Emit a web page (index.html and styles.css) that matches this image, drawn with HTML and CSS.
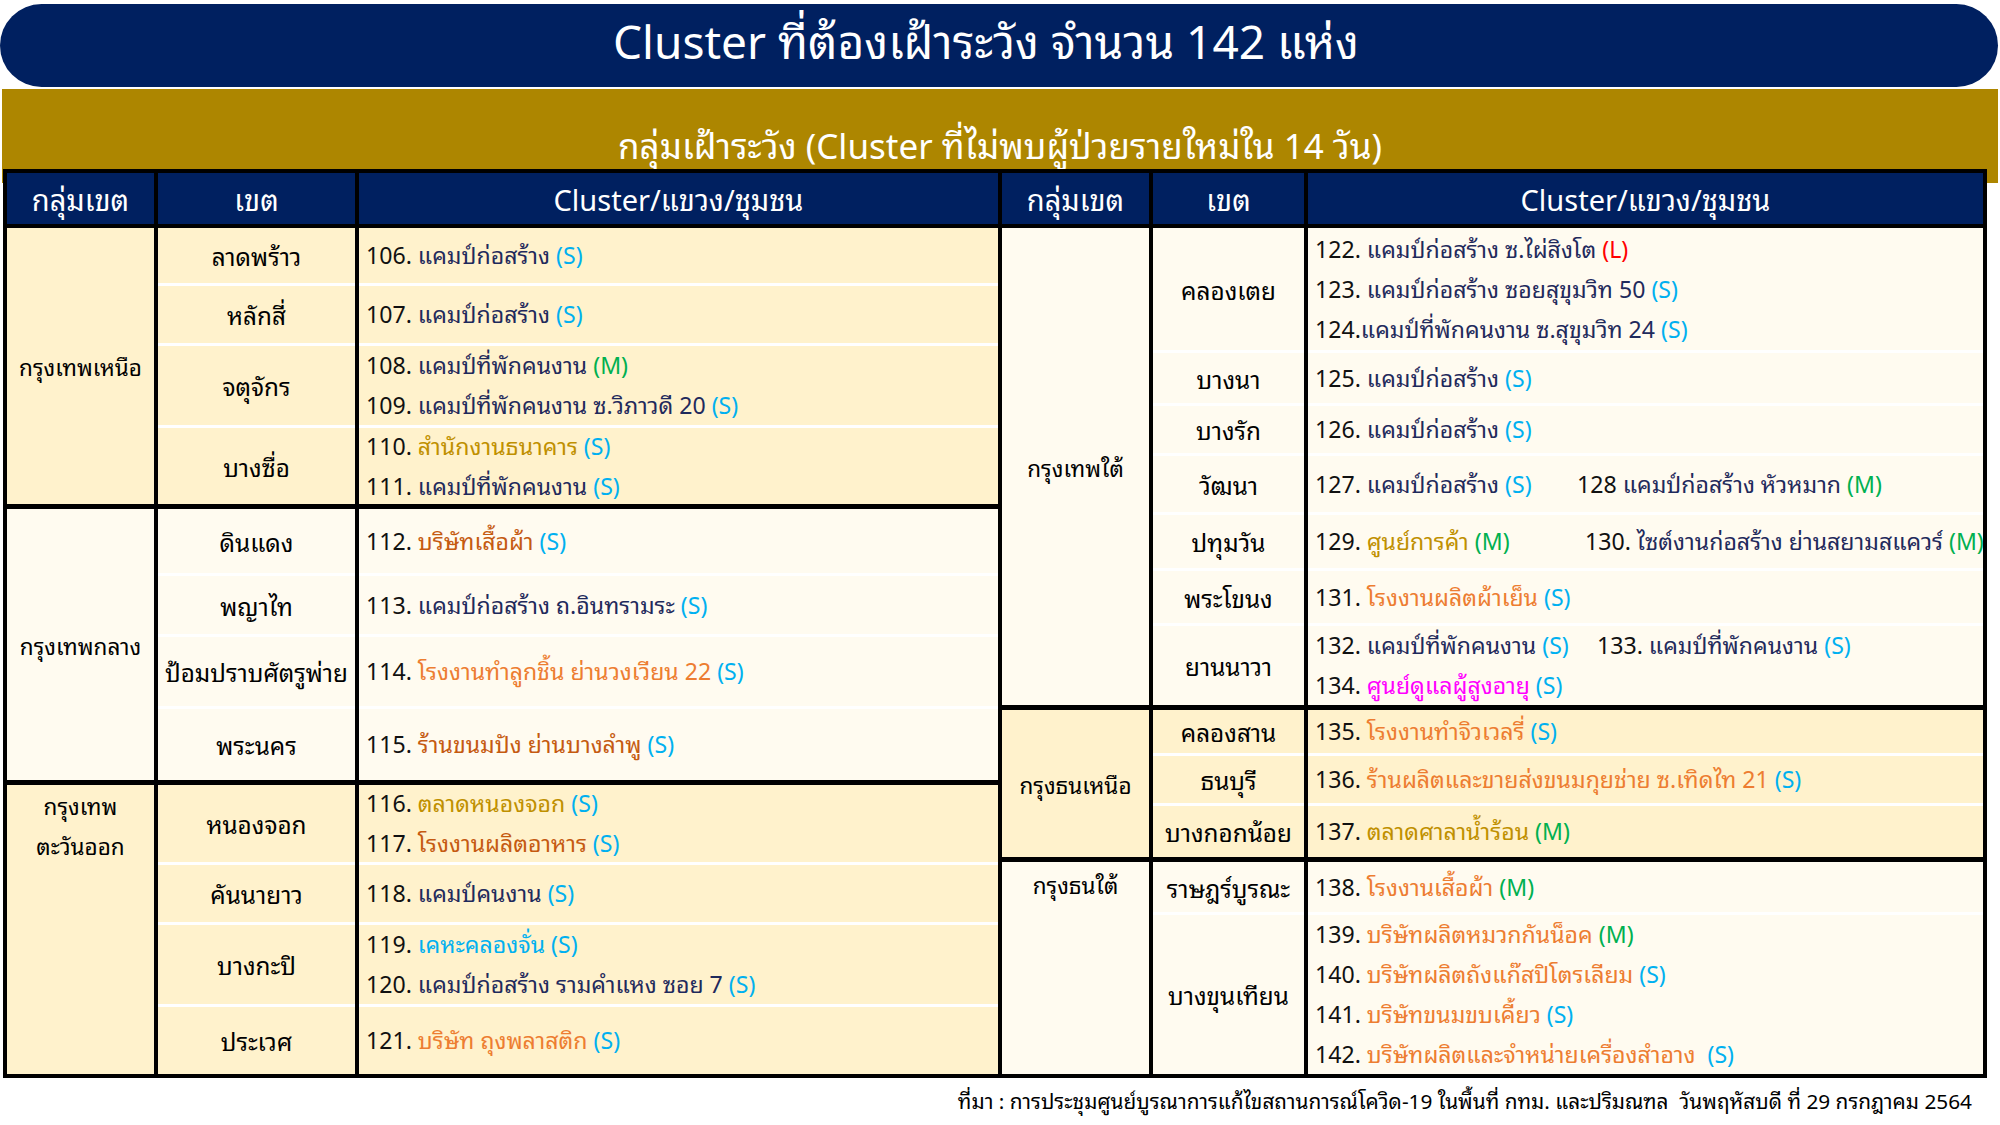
FILE: index.html
```html
<!DOCTYPE html>
<html lang="th">
<head>
<meta charset="utf-8">
<title>Cluster ที่ต้องเฝ้าระวัง</title>
<link rel="stylesheet" href="styles.css">
</head>
<body>
<div class="page">
  <header class="title">Cluster ที่ต้องเฝ้าระวัง จำนวน 142 แห่ง</header>
  <div class="band">กลุ่มเฝ้าระวัง (Cluster ที่ไม่พบผู้ป่วยรายใหม่ใน 14 วัน)</div>

  <div class="tables">
    <div class="tbl tbl-left">
      <div class="th">กลุ่มเขต</div>
      <div class="th">เขต</div>
      <div class="th">Cluster/แขวง/ชุมชน</div>

      <div class="zone y span4">กรุงเทพเหนือ</div>
      <div class="dist y">ลาดพร้าว</div>
      <div class="items y"><p><span class="n">106.</span> <span class="nv">แคมป์ก่อสร้าง</span> <span class="s">(S)</span></p></div>
      <div class="dist y sep">หลักสี่</div>
      <div class="items y sep"><p><span class="n">107.</span> <span class="nv">แคมป์ก่อสร้าง</span> <span class="s">(S)</span></p></div>
      <div class="dist y sep">จตุจักร</div>
      <div class="items y sep">
        <p><span class="n">108.</span> <span class="nv">แคมป์ที่พักคนงาน</span> <span class="m">(M)</span></p>
        <p><span class="n">109.</span> <span class="nv">แคมป์ที่พักคนงาน ซ.วิภาวดี 20</span> <span class="s">(S)</span></p>
      </div>
      <div class="dist y sep">บางซื่อ</div>
      <div class="items y sep">
        <p><span class="n">110.</span> <span class="gd">สำนักงานธนาคาร</span> <span class="s">(S)</span></p>
        <p><span class="n">111.</span> <span class="nv">แคมป์ที่พักคนงาน</span> <span class="s">(S)</span></p>
      </div>

      <div class="zone w span4 grp">กรุงเทพกลาง</div>
      <div class="dist w grp">ดินแดง</div>
      <div class="items w grp"><p><span class="n">112.</span> <span class="br">บริษัทเสื้อผ้า</span> <span class="s">(S)</span></p></div>
      <div class="dist w sep">พญาไท</div>
      <div class="items w sep"><p><span class="n">113.</span> <span class="nv">แคมป์ก่อสร้าง ถ.อินทรามระ</span> <span class="s">(S)</span></p></div>
      <div class="dist w sep">ป้อมปราบศัตรูพ่าย</div>
      <div class="items w sep"><p><span class="n">114.</span> <span class="or">โรงงานทำลูกชิ้น ย่านวงเวียน 22</span> <span class="s">(S)</span></p></div>
      <div class="dist w sep">พระนคร</div>
      <div class="items w sep"><p><span class="n">115.</span> <span class="br">ร้านขนมปัง ย่านบางลำพู</span> <span class="s">(S)</span></p></div>

      <div class="zone y span4 grp top">กรุงเทพ<br>ตะวันออก</div>
      <div class="dist y grp">หนองจอก</div>
      <div class="items y grp">
        <p><span class="n">116.</span> <span class="gd">ตลาดหนองจอก</span> <span class="s">(S)</span></p>
        <p><span class="n">117.</span> <span class="br">โรงงานผลิตอาหาร</span> <span class="s">(S)</span></p>
      </div>
      <div class="dist y sep">คันนายาว</div>
      <div class="items y sep"><p><span class="n">118.</span> <span class="nv">แคมป์คนงาน</span> <span class="s">(S)</span></p></div>
      <div class="dist y sep">บางกะปิ</div>
      <div class="items y sep">
        <p><span class="n">119.</span> <span class="bl">เคหะคลองจั่น</span> <span class="s">(S)</span></p>
        <p><span class="n">120.</span> <span class="nv">แคมป์ก่อสร้าง รามคำแหง ซอย 7</span> <span class="s">(S)</span></p>
      </div>
      <div class="dist y sep">ประเวศ</div>
      <div class="items y sep"><p><span class="n">121.</span> <span class="or">บริษัท ถุงพลาสติก</span> <span class="s">(S)</span></p></div>
    </div>

    <div class="tbl tbl-right">
      <div class="th">กลุ่มเขต</div>
      <div class="th">เขต</div>
      <div class="th">Cluster/แขวง/ชุมชน</div>

      <div class="zone w span7">กรุงเทพใต้</div>
      <div class="dist w">คลองเตย</div>
      <div class="items w">
        <p><span class="n">122.</span> <span class="nv">แคมป์ก่อสร้าง ซ.ไผ่สิงโต</span> <span class="l">(L)</span></p>
        <p><span class="n">123.</span> <span class="nv">แคมป์ก่อสร้าง ซอยสุขุมวิท 50</span> <span class="s">(S)</span></p>
        <p><span class="n">124.</span><span class="nv">แคมป์ที่พักคนงาน ซ.สุขุมวิท 24</span> <span class="s">(S)</span></p>
      </div>
      <div class="dist w sep">บางนา</div>
      <div class="items w sep"><p><span class="n">125.</span> <span class="nv">แคมป์ก่อสร้าง</span> <span class="s">(S)</span></p></div>
      <div class="dist w sep">บางรัก</div>
      <div class="items w sep"><p><span class="n">126.</span> <span class="nv">แคมป์ก่อสร้าง</span> <span class="s">(S)</span></p></div>
      <div class="dist w sep">วัฒนา</div>
      <div class="items w sep">
        <p class="pair"><span class="first w262"><span class="n">127.</span> <span class="nv">แคมป์ก่อสร้าง</span> <span class="s">(S)</span></span><span><span class="n">128</span> <span class="nv">แคมป์ก่อสร้าง หัวหมาก</span> <span class="m">(M)</span></span></p>
      </div>
      <div class="dist w sep">ปทุมวัน</div>
      <div class="items w sep">
        <p class="pair"><span class="first w270"><span class="n">129.</span> <span class="gd">ศูนย์การค้า</span> <span class="m">(M)</span></span><span><span class="n">130.</span> <span class="nv">ไซต์งานก่อสร้าง ย่านสยามสแควร์</span> <span class="m">(M)</span></span></p>
      </div>
      <div class="dist w sep">พระโขนง</div>
      <div class="items w sep"><p><span class="n">131.</span> <span class="or">โรงงานผลิตผ้าเย็น</span> <span class="s">(S)</span></p></div>
      <div class="dist w sep">ยานนาวา</div>
      <div class="items w sep">
        <p class="pair"><span class="first w282"><span class="n">132.</span> <span class="nv">แคมป์ที่พักคนงาน</span> <span class="s">(S)</span></span><span><span class="n">133.</span> <span class="nv">แคมป์ที่พักคนงาน</span> <span class="s">(S)</span></span></p>
        <p><span class="n">134.</span> <span class="mg">ศูนย์ดูแลผู้สูงอายุ</span> <span class="s">(S)</span></p>
      </div>

      <div class="zone y span3 grp">กรุงธนเหนือ</div>
      <div class="dist y grp">คลองสาน</div>
      <div class="items y grp"><p><span class="n">135.</span> <span class="or">โรงงานทำจิวเวลรี่</span> <span class="s">(S)</span></p></div>
      <div class="dist y sep">ธนบุรี</div>
      <div class="items y sep"><p><span class="n">136.</span> <span class="or">ร้านผลิตและขายส่งขนมกุยช่าย ซ.เทิดไท 21</span> <span class="s">(S)</span></p></div>
      <div class="dist y sep">บางกอกน้อย</div>
      <div class="items y sep"><p><span class="n">137.</span> <span class="gd">ตลาดศาลาน้ำร้อน</span> <span class="m">(M)</span></p></div>

      <div class="zone w span2 grp top top2">กรุงธนใต้</div>
      <div class="dist w grp">ราษฎร์บูรณะ</div>
      <div class="items w grp"><p><span class="n">138.</span> <span class="or">โรงงานเสื้อผ้า</span> <span class="m">(M)</span></p></div>
      <div class="dist w sep">บางขุนเทียน</div>
      <div class="items w sep">
        <p><span class="n">139.</span> <span class="or">บริษัทผลิตหมวกกันน็อค</span> <span class="m">(M)</span></p>
        <p><span class="n">140.</span> <span class="or">บริษัทผลิตถังแก๊สปิโตรเลียม</span> <span class="s">(S)</span></p>
        <p><span class="n">141.</span> <span class="or">บริษัทขนมขบเคี้ยว</span> <span class="s">(S)</span></p>
        <p><span class="n">142.</span> <span class="or">บริษัทผลิตและจำหน่ายเครื่องสำอาง</span> &nbsp;<span class="s">(S)</span></p>
      </div>
    </div>
  </div>

  <footer class="source">ที่มา : การประชุมศูนย์บูรณาการแก้ไขสถานการณ์โควิด-19 ในพื้นที่ กทม. และปริมณฑล &nbsp;วันพฤหัสบดี ที่ 29 กรกฎาคม 2564</footer>
</div>
</body>
</html>
```

FILE: styles.css
```css
* { box-sizing: border-box; }

html, body {
  margin: 0;
  padding: 0;
  background: #ffffff;
}

body {
  width: 2000px;
  height: 1125px;
  overflow: hidden;
  font-family: Tahoma, "Noto Sans Thai Looped", "Noto Sans Thai", "Noto Sans", "DejaVu Sans", sans-serif;
  font-stretch: 88%;
  color: #000;
}

.page {
  padding-top: 4px;
}

.title {
  height: 83px;
  margin: 0 2px 0 0;
  background: #002060;
  border-radius: 42px;
  color: #fff;
  font-size: 46px;
  display: flex;
  align-items: center;
  justify-content: center;
  padding: 0 26px 16px 0;
}

.band {
  height: 94px;
  margin: 2px 2px 0 2px;
  background: #ad8600;
  color: #fff;
  font-size: 35px;
  line-height: 40px;
  padding-top: 34px;
  text-align: center;
}

.tables {
  display: flex;
  margin: -14px 0 0 3px;
}

.tbl {
  display: grid;
  background: #000;
  border-top: 4px solid #000;
  border-bottom: 4px solid #000;
  border-right: 4px solid #000;
  column-gap: 4px;
}

.tbl-left {
  width: 999px;
  border-left: 4px solid #000;
  grid-template-columns: 147px 197px 639px;
  grid-template-rows: 55px 55px 60px 82px 79px 69px 61px 72px 74px 82px 60px 82px 70px;
}

.tbl-right {
  width: 985px;
  grid-template-columns: 147px 151px 675px;
  grid-template-rows: 55px 122px 53px 50px 59px 56px 55px 82px 48px 50px 54px 55px 162px;
}

.th {
  background: #002060;
  color: #fff;
  font-size: 29px;
  border-bottom: 4px solid #000;
  display: flex;
  align-items: center;
  justify-content: center;
  padding-bottom: 2px;
}

.y { background: #fff2cc; }
.w { background: #fffbf0; }

.sep { border-top: 3px solid #fff; }
.grp { border-top: 5px solid #000; }

.span2 { grid-row: span 2; }
.span3 { grid-row: span 3; }
.span4 { grid-row: span 4; }
.span7 { grid-row: span 7; }

.zone {
  font-size: 22.5px;
  line-height: 40px;
  display: flex;
  align-items: center;
  justify-content: center;
  text-align: center;
}

.zone.top { align-items: flex-start; }
.zone.top2 { padding-top: 2px; }

.dist {
  font-size: 24.3px;
  display: flex;
  align-items: center;
  justify-content: center;
  text-align: center;
  white-space: nowrap;
}

.items {
  font-size: 23.1px;
  line-height: 40px;
  display: flex;
  flex-direction: column;
  justify-content: center;
  padding: 0 0 3px 7px;
  white-space: nowrap;
}

.items p { margin: 0; }

.pair { display: flex; }
.pair .first { display: inline-block; flex-shrink: 0; }
.w262 { width: 262px; }
.w270 { width: 270px; }
.w282 { width: 282px; }

.n  { color: #111111; }
.nv { color: #1f2a5c; }
.gd { color: #bf9000; }
.br { color: #c55a11; }
.or { color: #ed7d31; }
.bl { color: #00b0f0; }
.mg { color: #ff00ff; }
.s  { color: #00b0f0; }
.m  { color: #00b050; }
.l  { color: #ff0000; }

.source {
  margin-top: 7px;
  font-size: 20.8px;
  line-height: 30px;
  text-align: right;
  padding-right: 28px;
}
```
